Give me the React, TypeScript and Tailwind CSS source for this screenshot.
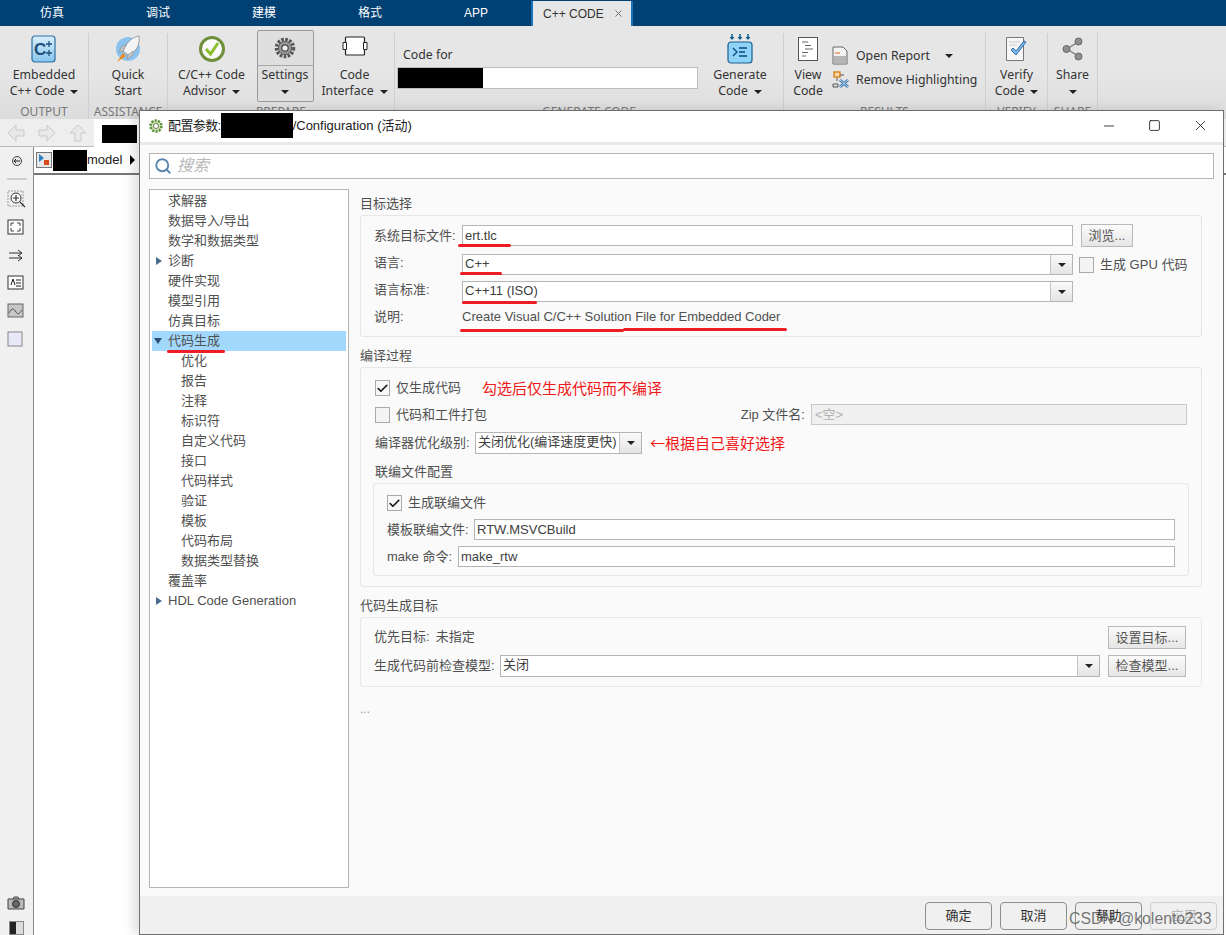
import type { ReactNode } from "react";
import { Check, Minus, Search, Square, X } from "lucide-react";

const sans = "font-['Liberation_Sans','Noto_Sans_CJK_SC',sans-serif]";
const ribbonFont = "font-['Noto_Sans','Noto_Sans_CJK_SC',sans-serif]";

const Caret = ({ className = "" }: { className?: string }) => (
  <span className={`inline-block h-0 w-0 border-x-[4px] border-t-[4px] border-x-transparent border-t-[#222] ${className}`} />
);

function CppIcon() {
  return (
    <svg width="26" height="28" viewBox="0 0 26 28">
      <defs>
        <linearGradient id="cpp" x1="0" y1="0" x2="0" y2="1">
          <stop offset="0" stopColor="#d9effc" />
          <stop offset="1" stopColor="#86c6ee" />
        </linearGradient>
      </defs>
      <rect x="1" y="1" width="23" height="26" rx="3" fill="url(#cpp)" stroke="#2d6e9e" strokeWidth="1.2" />
      <text x="3" y="20" fontSize="17" fontWeight="700" fontFamily="Liberation Sans" fill="#1f4e78">C</text>
      <path d="M18 6v6M15 9h6M18 15v6M15 18h6" stroke="#1f4e78" strokeWidth="1.3" />
    </svg>
  );
}

function RocketIcon() {
  return (
    <svg width="28" height="30" viewBox="0 0 28 30">
      <circle cx="14" cy="15" r="12" fill="#8cc3ee" />
      <path d="M25 2c-6 1-11 5-14 11l-2 4 5 4 4-2c5-3 8-9 7-17z" fill="#f4f4f4" stroke="#8a8a8a" strokeWidth=".8" />
      <path d="M9 17l-4 1 3-6 4-1zM14 21l-1 4 6-4 0-4z" fill="#c9c9c9" stroke="#8a8a8a" strokeWidth=".6" />
      <path d="M9 19l3 3-9 6z" fill="#f08a1d" />
    </svg>
  );
}

function AdvisorIcon() {
  return (
    <svg width="28" height="28" viewBox="0 0 28 28">
      <circle cx="14" cy="14" r="11.5" fill="#fafafa" stroke="#6f8f3a" strokeWidth="3" />
      <path d="M8 14l4.5 5L20 8" fill="none" stroke="#8cbf2f" strokeWidth="3" />
    </svg>
  );
}

function GearIcon() {
  return (
    <svg width="24" height="24" viewBox="0 0 24 24">
      <circle cx="12" cy="12" r="8.5" fill="none" stroke="#555" strokeWidth="3.5" strokeDasharray="2.6 1.4" />
      <circle cx="12" cy="12" r="6.5" fill="#9a9a9a" stroke="#555" />
      <circle cx="12" cy="12" r="3.2" fill="#eee" stroke="#444" strokeWidth="1.2" />
    </svg>
  );
}

function InterfaceIcon() {
  return (
    <svg width="26" height="20" viewBox="0 0 26 20" className="mb-[6px]">
      <rect x="3.5" y="1" width="19" height="18" rx="1" fill="#fff" stroke="#222" strokeWidth="1.2" />
      <path d="M1 6.5h3.5v7H1zM21.500 6.5H25v7h-3.500z" fill="#fff" stroke="#222" />
    </svg>
  );
}

function GenerateIcon() {
  return (
    <svg width="26" height="30" viewBox="0 0 26 30">
      <path d="M5 0v3M21 0v3M13 0v3" stroke="#0b5c94" strokeWidth="1.5" />
      <path d="M2.500 3h5L5 6zM10.500 3h5L13 6zM18.500 3h5L21 6z" fill="#0b5c94" />
      <rect x="1" y="8" width="24" height="21" rx="3" fill="#8fd3f8" stroke="#1c5f8f" strokeWidth="1.2" />
      <path d="M6 14l4 4-4 4" fill="none" stroke="#0c4a78" strokeWidth="1.3" />
      <path d="M12 14h8M12 18h6M12 22h8" stroke="#0c4a78" strokeWidth="1.3" />
    </svg>
  );
}

function ViewIcon() {
  return (
    <svg width="22" height="26" viewBox="0 0 22 26">
      <rect x="1.5" y="1.5" width="19" height="23" fill="#fff" stroke="#555" />
      <path d="M5 6h6M8 9.500h6M8 13h8M5 16.500h6M5 20h4" stroke="#666" />
    </svg>
  );
}

function ReportIcon() {
  return (
    <svg width="16" height="19" viewBox="0 0 16 19">
      <path d="M1 1h10l4 4v13H1z" fill="#f3f3f3" stroke="#666" />
      <path d="M3 6h5v2H3z" fill="#eda584" />
      <rect x="2" y="10" width="12" height="7" fill="#b5b5b5" />
    </svg>
  );
}

function HighlightIcon() {
  return (
    <svg width="18" height="18" viewBox="0 0 18 18">
      <rect x="2" y="1" width="6" height="5" fill="#f8d9a8" stroke="#d8801a" strokeWidth="1.4" />
      <path d="M5 7v3M1 13h5v3H1zM8 4h4" stroke="#555" fill="none" />
      <path d="M8 9l8 7M16 9l-8 7" stroke="#3e78ad" strokeWidth="2.8" />
      <path d="M8 9l8 7M16 9l-8 7" stroke="#bfe0f5" strokeWidth="1" />
    </svg>
  );
}

function VerifyIcon() {
  return (
    <svg width="24" height="26" viewBox="0 0 24 26">
      <path d="M1.500 1.500h17v23h-17z" fill="#f7f7f7" stroke="#777" />
      <path d="M4 6h11M4 9h8" stroke="#ccc" />
      <path d="M6 14l5 5 10-13-2-1-8 10-3-3z" fill="#7fb8ea" stroke="#2b6aa5" />
    </svg>
  );
}

function ShareIcon() {
  return (
    <svg width="22" height="24" viewBox="0 0 22 24">
      <path d="M16 5L5 12l11 7" fill="none" stroke="#777" strokeWidth="1.3" />
      <circle cx="16.5" cy="4.5" r="3.5" fill="#8f8f8f" stroke="#666" />
      <circle cx="4.5" cy="12" r="3.5" fill="#8f8f8f" stroke="#666" />
      <circle cx="16.5" cy="19.5" r="3.5" fill="#8f8f8f" stroke="#666" />
    </svg>
  );
}

function RibbonButton({ icon, lines, caret, width }: { icon: ReactNode; lines: string[]; caret?: "inline" | "below"; width: string }) {
  return (
    <div className={`flex flex-col items-center text-[12.3px] leading-[16px] text-[#333] ${width}`}>
      <div className="flex h-[31px] items-center justify-center">{icon}</div>
      <div className="mt-[3px] text-center whitespace-nowrap">
        {lines.map((l, i) => (
          <div key={l}>
            {l}
            {caret === "inline" && i === lines.length - 1 && <Caret className="ml-[6px] align-middle" />}
          </div>
        ))}
        {caret === "below" && (
          <div>
            <Caret className="align-middle" />
          </div>
        )}
      </div>
    </div>
  );
}

function RibbonGroup({ label, width, children }: { label: string; width: string; children: ReactNode }) {
  return (
    <div className={`flex h-full shrink-0 flex-col border-r border-[#cfcfcf] ${width}`}>
      <div className="flex h-[79px] justify-center">{children}</div>
      <div className="text-center text-[12px] leading-[14px] whitespace-nowrap text-[#777]">{label}</div>
    </div>
  );
}

function Ribbon() {
  return (
    <div className={`flex h-[93px] bg-gradient-to-b from-[#e6e6e6] via-[#e6e6e6] to-[#dcdcdc] pt-[7px] ${ribbonFont}`}>
      <RibbonGroup label="OUTPUT" width="w-[89px]">
        <RibbonButton icon={<CppIcon />} lines={["Embedded", "C++ Code"]} caret="inline" width="w-[86px]" />
      </RibbonGroup>
      <RibbonGroup label="ASSISTANCE" width="w-[79px]">
        <RibbonButton icon={<RocketIcon />} lines={["Quick", "Start"]} width="w-[76px]" />
      </RibbonGroup>
      <RibbonGroup label="PREPARE" width="w-[227px]">
        <div className="flex gap-[3px]">
          <RibbonButton icon={<AdvisorIcon />} lines={["C/C++ Code", "Advisor"]} caret="inline" width="w-[84px]" />
          <div className="-mt-[3px] h-[72px] w-[57px] rounded-[2px] border border-[#9a9a9a] bg-[#dfdfdf]">
            <div className="flex h-[35px] items-center justify-center border-b border-[#a8a8a8]">
              <GearIcon />
            </div>
            <div className="pt-[1px] text-center text-[12.3px] leading-[16px] text-[#333]">
              Settings
              <div>
                <Caret className="align-middle" />
              </div>
            </div>
          </div>
          <RibbonButton icon={<InterfaceIcon />} lines={["Code", "Interface"]} caret="inline" width="w-[76px]" />
        </div>
      </RibbonGroup>
      <RibbonGroup label="GENERATE CODE" width="w-[389px]">
        <div className="flex w-full">
          <div className="ml-[2px] w-[301px] text-[12.3px] leading-[16px] text-[#333]">
            <div className="pt-[14px] pl-[6px]">Code for</div>
            <div className="mt-[4px] flex h-[22px] border border-[#bdbdbd] bg-white">
              <div className="w-[85px] bg-black" />
            </div>
          </div>
          <div className="ml-[6px] flex-1">
            <RibbonButton icon={<GenerateIcon />} lines={["Generate", "Code"]} caret="inline" width="w-[72px]" />
          </div>
        </div>
      </RibbonGroup>
      <RibbonGroup label="RESULTS" width="w-[202px]">
        <div className="flex w-full text-[12.3px] leading-[16px] text-[#333]">
          <RibbonButton icon={<ViewIcon />} lines={["View", "Code"]} width="w-[48px]" />
          <div className="flex flex-col gap-[5px] pt-[13px]">
            <div className="flex h-[19px] items-center gap-[8px] whitespace-nowrap">
              <ReportIcon />
              Open Report
              <Caret className="ml-[7px]" />
            </div>
            <div className="flex h-[19px] items-center gap-[6px] whitespace-nowrap">
              <HighlightIcon />
              Remove Highlighting
            </div>
          </div>
        </div>
      </RibbonGroup>
      <RibbonGroup label="VERIFY" width="w-[62px]">
        <RibbonButton icon={<VerifyIcon />} lines={["Verify", "Code"]} caret="inline" width="w-[60px]" />
      </RibbonGroup>
      <RibbonGroup label="SHARE" width="w-[50px]">
        <RibbonButton icon={<ShareIcon />} lines={["Share"]} caret="below" width="w-[48px]" />
      </RibbonGroup>
    </div>
  );
}

function Toolbar() {
  return (
    <div className="flex h-[28px] items-center border-b border-[#bbb] bg-[#eeeeee]">
      <svg width="94" height="24" viewBox="0 0 94 24" className="shrink-0">
        <g fill="#e9e9e9" stroke="#c9c9c9">
          <path d="M8 12l8-8v5h8v6h-8v5z" />
          <path d="M55 12l-8-8v5h-8v6h8v5z" />
          <path d="M78 4l8 8h-5v8h-6v-8h-5z" />
        </g>
      </svg>
      <div className="mt-[1px] h-[28px] w-[45px] bg-white pt-[6px] pl-[8px]">
        <div className="h-[18px] w-[35px] bg-black" />
      </div>
    </div>
  );
}

function SideStrip() {
  return (
    <div className="flex h-full w-[34px] shrink-0 flex-col items-center border-r border-[#8a8a8a] bg-[#f0f0f0]">
      <svg width="24" height="760" viewBox="0 0 24 760" className="mt-[3px]">
        <circle cx="12" cy="11" r="4.5" fill="#e8e8e8" stroke="#444" />
        <path d="M15 11H9m2-2l-2 2 2 2" stroke="#222" fill="none" />
        <path d="M2 29h20" stroke="#aaa" />
        <rect x="3" y="41" width="15" height="15" fill="none" stroke="#999" strokeDasharray="2 1" />
        <circle cx="11" cy="48" r="5" fill="#fff" stroke="#333" />
        <path d="M8 48h6M11 45v6M15 52l5 5" stroke="#333" strokeWidth="1.2" />
        <rect x="3" y="70" width="15" height="14" fill="#fff" stroke="#333" />
        <path d="M6 73h3M6 73v3M15 73h-3M15 73v3M6 81h3M6 81v-3M15 81h-3M15 81v-3" stroke="#444" />
        <path d="M4 103h13M4 108h13M13 100l4 3-4 3M13 105l4 3-4 3" stroke="#333" fill="none" />
        <rect x="3" y="126" width="15" height="13" fill="#fff" stroke="#333" />
        <path d="M6 135l2-6 2 6M11 130h5M11 133h5M11 136h5" stroke="#222" fill="none" />
        <rect x="3" y="154" width="15" height="13" fill="#c6c6c6" stroke="#666" />
        <path d="M4 163c3-6 5-4 7-1s3 2 6-2" stroke="#555" fill="none" />
        <rect x="3" y="182" width="14" height="14" fill="#e8e8f8" stroke="#888" />
        <path d="M3 749h16v10H3zM8 749l1-2h4l1 2" fill="#b8b8b8" stroke="#444" />
        <circle cx="11" cy="754" r="3.5" fill="#666" stroke="#333" />
      </svg>
      <div className="mt-[11px] flex h-[14px] w-[15px] shrink-0 items-start border border-[#888] bg-[#ddd]">
        <div className="h-full w-[6px] bg-[#222]" />
      </div>
    </div>
  );
}

function Breadcrumb() {
  return (
    <div className={`flex h-[28px] items-center border-b-2 border-[#777] bg-white pl-[2px] text-[13px] text-[#222] ${sans}`}>
      <svg width="16" height="16" viewBox="0 0 16 16" className="shrink-0">
        <rect x=".5" y=".5" width="15" height="15" fill="#e8e8e8" stroke="#777" />
        <path d="M3 2l5 4-5 4z" fill="#2f7fc1" />
        <rect x="8" y="8" width="5" height="5" fill="#d84a1b" />
      </svg>
      <div className="ml-[1px] h-[21px] w-[34px] bg-black" />
      model
      <span className="ml-[8px] h-0 w-0 border-y-[5px] border-l-[5px] border-y-transparent border-l-black" />
    </div>
  );
}

const tree: { t: string; indent?: boolean; arrow?: "right" | "down"; sel?: boolean }[] = [
  { t: "求解器" },
  { t: "数据导入/导出" },
  { t: "数学和数据类型" },
  { t: "诊断", arrow: "right" },
  { t: "硬件实现" },
  { t: "模型引用" },
  { t: "仿真目标" },
  { t: "代码生成", arrow: "down", sel: true },
  { t: "优化", indent: true },
  { t: "报告", indent: true },
  { t: "注释", indent: true },
  { t: "标识符", indent: true },
  { t: "自定义代码", indent: true },
  { t: "接口", indent: true },
  { t: "代码样式", indent: true },
  { t: "验证", indent: true },
  { t: "模板", indent: true },
  { t: "代码布局", indent: true },
  { t: "数据类型替换", indent: true },
  { t: "覆盖率" },
  { t: "HDL Code Generation", arrow: "right" },
];

function Tree() {
  return (
    <div className="h-[699px] w-[200px] shrink-0 border border-[#b5b5b5] bg-white px-[2px] pt-[1px] text-[13px] text-[#505050]">
      {tree.map((n) => (
        <div key={n.t} className={`relative flex h-[20px] items-center pb-[1px] ${n.indent ? "pl-[29px]" : "pl-[16px]"} ${n.sel ? "bg-[#a3d8fd]" : ""}`}>
          {n.arrow === "right" && (
            <span className="absolute left-[4px] h-0 w-0 border-y-[4px] border-l-[6px] border-y-transparent border-l-[#4a6b8f]" />
          )}
          {n.arrow === "down" && (
            <span className="absolute left-[2px] h-0 w-0 border-x-[4.5px] border-t-[6px] border-x-transparent border-t-[#2c4f73]" />
          )}
          {n.t}
        </div>
      ))}
    </div>
  );
}

function Field({ value, className = "" }: { value: string; className?: string }) {
  return (
    <div className={`flex h-[21px] items-center border border-[#b5b5b5] bg-white pl-[2px] text-[13px] whitespace-nowrap text-[#404040] ${className}`}>
      {value}
    </div>
  );
}

function Combo({ value, className = "" }: { value: string; className?: string }) {
  return (
    <div className={`flex items-stretch border border-[#b5b5b5] bg-white text-[13px] whitespace-nowrap text-[#404040] ${className}`}>
      <div className="flex flex-1 items-center pb-[2px] pl-[2px]">{value}</div>
      <div className="flex w-[22px] items-center justify-center border-l border-[#c4c4c4] bg-gradient-to-b from-[#fafafa] to-[#e4e4e4]">
        <Caret />
      </div>
    </div>
  );
}

function Btn({ label, className = "" }: { label: string; className?: string }) {
  return (
    <div className={`flex items-center justify-center border border-[#b9b9b9] bg-gradient-to-b from-[#fbfbfb] to-[#e6e6e6] text-[13px] text-[#555] ${className}`}>
      {label}
    </div>
  );
}

function Checkbox({ checked }: { checked?: boolean }) {
  return (
    <span className={`flex h-[16px] w-[15px] shrink-0 items-center justify-center border border-[#a9a9a9] ${checked ? "bg-[#f7f7f7]" : "bg-[#f4f4f4]"}`}>
      {checked && <Check size={13} strokeWidth={3} color="#111" />}
    </span>
  );
}

function SectionTitle({ children }: { children: ReactNode }) {
  return <div className="h-[20px] text-[13px] leading-[18px] text-[#505050]">{children}</div>;
}

function Box({ className = "", children }: { className?: string; children: ReactNode }) {
  return <div className={`rounded-[3px] border border-[#e6e6e6] bg-[#fafafa] ${className}`}>{children}</div>;
}

const redNote = "font-['Noto_Sans_CJK_SC',sans-serif] text-[15px] text-[#f01818]";

function SettingsPane() {
  return (
    <div className="ml-[11px] w-[842px] pt-[6px] text-[13px] text-[#505050]">
      <SectionTitle>目标选择</SectionTitle>
      <Box className="h-[122px] pt-[9px] pl-[13px]">
        <div className="flex">
          <div className="flex h-[21px] w-[88px] items-center">系统目标文件:</div>
          <Field value="ert.tlc" className="w-[611px]" />
          <Btn label="浏览..." className="-mt-[1px] ml-[8px] h-[23px] w-[52px]" />
        </div>
        <div className="mt-[7px] flex">
          <div className="flex h-[21px] w-[88px] items-center pb-[3px]">语言:</div>
          <Combo value="C++" className="h-[21px] w-[611px]" />
          <div className="ml-[6px] flex items-center gap-[6px]">
            <Checkbox />
            生成 GPU 代码
          </div>
        </div>
        <div className="mt-[6px] flex">
          <div className="flex h-[21px] w-[88px] items-center pb-[3px]">语言标准:</div>
          <Combo value="C++11 (ISO)" className="h-[21px] w-[611px]" />
        </div>
        <div className="mt-[5px] flex h-[20px] items-center">
          <div className="w-[88px]">说明:</div>
          <span>Create Visual C/C++ Solution File for Embedded Coder</span>
        </div>
      </Box>

      <div className="mt-[10px]">
        <SectionTitle>编译过程</SectionTitle>
      </div>
      <Box className="h-[220px] pt-[12px] pl-[14px]">
        <div className="flex h-[16px] items-center gap-[6px]">
          <Checkbox checked />
          仅生成代码
          <span className={`ml-[15px] ${redNote}`}>勾选后仅生成代码而不编译</span>
        </div>
        <div className="mt-[8px] flex h-[21px] items-center gap-[6px]">
          <Checkbox />
          代码和工件打包
          <span className="ml-auto">Zip 文件名:</span>
          <div className="mr-[14px] flex h-[21px] w-[376px] items-center border border-[#c9c9c9] bg-[#f0f0f0] pl-[3px] text-[#b0b0b0]">
            &lt;空&gt;
          </div>
        </div>
        <div className="mt-[7px] flex h-[22px] items-center">
          <div className="w-[100px]">编译器优化级别:</div>
          <Combo value="关闭优化(编译速度更快)" className="h-[22px] w-[167px]" />
          <span className={`ml-[8px] ${redNote}`}>←根据自己喜好选择</span>
        </div>
        <div className="mt-[9px]">
          <SectionTitle>联编文件配置</SectionTitle>
        </div>
        <Box className="-ml-[2px] h-[93px] w-[816px] pt-[11px] pl-[13px]">
          <div className="flex h-[16px] items-center gap-[6px]">
            <Checkbox checked />
            生成联编文件
          </div>
          <div className="mt-[8px] flex items-center">
            <div className="w-[87px]">模板联编文件:</div>
            <Field value="RTW.MSVCBuild" className="w-[701px]" />
          </div>
          <div className="mt-[6px] flex items-center">
            <div className="w-[71px]">make 命令:</div>
            <Field value="make_rtw" className="w-[717px]" />
          </div>
        </Box>
      </Box>

      <div className="mt-[10px]">
        <SectionTitle>代码生成目标</SectionTitle>
      </div>
      <Box className="h-[70px] pt-[8px] pl-[13px]">
        <div className="flex h-[23px] items-center pb-[2px]">
          <span>优先目标:</span>
          <span className="ml-[6px]">未指定</span>
          <Btn label="设置目标..." className="mr-[15px] -mb-[2px] ml-auto h-[23px] w-[78px]" />
        </div>
        <div className="mt-[6px] flex h-[22px] items-center">
          <div className="w-[126px]">生成代码前检查模型:</div>
          <Combo value="关闭" className="h-[22px] w-[600px]" />
          <Btn label="检查模型..." className="mr-[15px] ml-auto h-[22px] w-[78px]" />
        </div>
      </Box>
      <div className="mt-[16px] text-[12px] leading-[12px] text-[#999]">...</div>
    </div>
  );
}

function Footer() {
  const cls = "flex h-[28px] w-[67px] items-center justify-center rounded-[4px] border border-[#8f8f8f] text-[13px] text-[#333]";
  return (
    <div className="mt-[8px] flex h-[39px] flex-1 justify-end gap-[8px] bg-[#f0f0f0] pt-[6px] pr-[6px]">
      <div className={cls}>确定</div>
      <div className={cls}>取消</div>
      <div className={cls}>帮助</div>
      <div className={`${cls} border-[#cdcdcd] text-[#b5b5b5]`}>应用</div>
    </div>
  );
}

function Dialog() {
  return (
    <div className={`absolute top-[110px] left-[139px] flex h-[825px] w-[1085px] flex-col border border-[#6f6f6f] bg-[#fafafa] shadow-[-6px_0_10px_rgba(0,0,0,0.12)] ${sans}`}>
      <div className="flex h-[31px] shrink-0 items-center bg-white pb-[2px] pl-[8px] text-[13px] text-[#222]">
        <svg width="16" height="16" viewBox="0 0 16 16">
          <circle cx="8" cy="8" r="5.5" fill="#cfe3b5" stroke="#5c8f3c" strokeWidth="2.5" strokeDasharray="2.2 1.2" />
          <circle cx="8" cy="8" r="2.5" fill="#fff" stroke="#6a7f5a" />
        </svg>
        <span className="ml-[4px] tracking-[-0.6px]">配置参数:</span>
        <div className="h-[25px] w-[72px] bg-black" />
        <span>/Configuration (活动)</span>
        <div className="ml-auto flex items-center gap-[31px] pr-[14px] text-[#111]">
          <Minus size={16} strokeWidth={1.2} />
          <Square size={13} strokeWidth={1.5} />
          <X size={17} strokeWidth={1.1} />
        </div>
      </div>
      <div className="h-[3px] shrink-0 bg-[#e9e9e9]" />
      <div className="mx-[9px] mt-[8px] flex h-[26px] shrink-0 items-center border border-[#b5b5b5] bg-white pl-[4px]">
        <Search size={18} strokeWidth={2.5} color="#5a86ad" />
        <span className="ml-[5px] text-[16px] text-[#b8b8b8] italic">搜索</span>
      </div>
      <div className="mt-[10px] flex shrink-0 pl-[9px]">
        <Tree />
        <SettingsPane />
      </div>
      <Footer />
    </div>
  );
}

const tabs = ["仿真", "调试", "建模", "格式", "APP"];

export default function App() {
  return (
    <div className={`relative h-[935px] w-[1226px] overflow-hidden bg-white ${sans}`}>
      <div className="flex h-[26px] bg-[#004073] text-[12px] text-white">
        {tabs.map((t, i) => (
          <div key={t} className={`flex w-[106px] items-center justify-center ${i === 0 ? "-ml-[1px]" : ""}`}>
            {t}
          </div>
        ))}
        <div className="mt-[1px] ml-[2px] flex h-[25px] w-[102px] items-center border-x-2 border-[#1a72b8] bg-[#e6e6e6] pl-[10px] text-[#333]">
          C++ CODE
          <X size={11} className="ml-[9px] text-[#666]" />
        </div>
      </div>
      <Ribbon />
      <Toolbar />
      <div className="flex h-[788px]">
        <SideStrip />
        <div className="flex-1">
          <Breadcrumb />
        </div>
      </div>
      <Dialog />

      {/* annotations drawn on top of the screenshot */}
      <div className="absolute top-[244px] left-[458px] h-[3px] w-[53px] rounded-full bg-[#ee1c25]" />
      <div className="absolute top-[272px] left-[460px] h-[3px] w-[42px] rounded-full bg-[#ee1c25]" />
      <div className="absolute top-[301px] left-[462px] h-[3px] w-[75px] rounded-full bg-[#ee1c25]" />
      <div className="absolute top-[329px] left-[460px] h-[3px] w-[164px] rounded-full bg-[#ee1c25]" />
      <div className="absolute top-[328px] left-[623px] h-[3px] w-[164px] rounded-full bg-[#ee1c25]" />
      <div className="absolute top-[350px] left-[167px] h-[3px] w-[58px] rounded-full bg-[#ee1c25]" />
      <div className="absolute top-[909px] left-[1069px] text-[15.8px] leading-[20px] whitespace-nowrap text-[#555]/80">CSDN @kolento233</div>
    </div>
  );
}
